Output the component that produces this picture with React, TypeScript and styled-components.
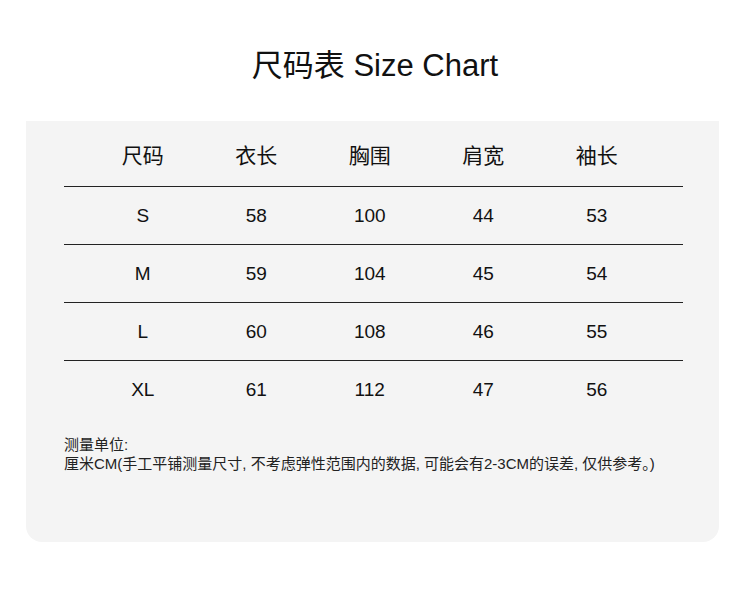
import styled, { createGlobalStyle } from 'styled-components';

const GlobalStyle = createGlobalStyle`
  body {
    margin: 0;
    background: #fff;
    font-family: 'Liberation Sans', 'Noto Sans CJK SC', sans-serif;
    color: #111;
  }
`;

const Page = styled.div`
  width: 750px;
  height: 611px;
  padding-top: 46px;
  box-sizing: border-box;
`;

const Title = styled.h1`
  margin: 0;
  font-size: 31px;
  line-height: 40px;
  font-weight: 400;
  text-align: center;
  color: #111;
`;

const Card = styled.section`
  margin: 35px 31px 0 26px;
  height: 421px;
  box-sizing: border-box;
  padding: 0 36px 0 38px;
  background: #f4f4f4;
  border-radius: 0 0 16px 16px;
`;

const Row = styled.div<{ height: number; divider: boolean }>`
  display: grid;
  grid-template-columns: repeat(5, 113.5px);
  padding: 0 0 0 22px;
  box-sizing: border-box;
  height: ${(props) => props.height}px;
  align-items: center;
  border-bottom: ${(props) => (props.divider ? '1.5px solid #222' : 'none')};
`;

const Cell = styled.div<{ head?: boolean }>`
  text-align: center;
  font-size: ${(props) => (props.head ? '21px' : '19px')};
  color: #111;
`;

const Note = styled.p`
  margin: 16px 0 0;
  font-size: 15px;
  line-height: 19px;
  color: #222;
`;

const heads = ['尺码', '衣长', '胸围', '肩宽', '袖长'];
const rows = [
  ['S', '58', '100', '44', '53'],
  ['M', '59', '104', '45', '54'],
  ['L', '60', '108', '46', '55'],
  ['XL', '61', '112', '47', '56'],
];

const App = () => (
  <>
    <GlobalStyle />
    <Page>
      <Title>尺码表 Size Chart</Title>
      <Card>
        <Row height={66} divider>
          {heads.map((h) => (
            <Cell head key={h}>
              {h}
            </Cell>
          ))}
        </Row>
        {rows.map((r, i) => (
          <Row key={r[0]} height={58} divider={i < rows.length - 1}>
            {r.map((v, j) => (
              <Cell key={j}>{v}</Cell>
            ))}
          </Row>
        ))}
        <Note>
          测量单位:
          <br />
          厘米CM(手工平铺测量尺寸, 不考虑弹性范围内的数据, 可能会有2-3CM的误差, 仅供参考。)
        </Note>
      </Card>
    </Page>
  </>
);

export default App;
